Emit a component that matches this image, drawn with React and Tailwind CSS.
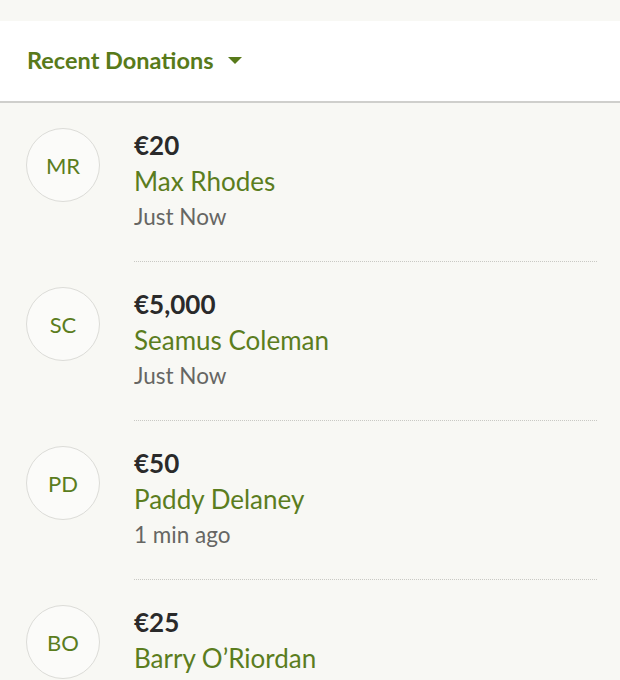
import React from "react";

const donations = [
  { initials: "MR", amount: "€20", name: "Max Rhodes", time: "Just Now" },
  { initials: "SC", amount: "€5,000", name: "Seamus Coleman", time: "Just Now" },
  { initials: "PD", amount: "€50", name: "Paddy Delaney", time: "1 min ago" },
  { initials: "BO", amount: "€25", name: "Barry O’Riordan", time: "2 mins ago" },
];

const App = () => {
  return (
    <div
      className="h-[680px] w-[620px] overflow-hidden bg-[#f8f8f4]"
      style={{ fontFamily: "Lato, 'Open Sans', sans-serif" }}
    >
      <div className="h-[21px]" />

      {/* Header */}
      <div className="flex h-[82px] items-center border-b-2 border-[#cfcfcc] bg-white pl-[27px]">
        <button className="flex items-center gap-[14px] text-[23.5px] font-bold text-[#587a1a]">
          Recent Donations
          <svg width="14" height="7" viewBox="0 0 14 7" className="mt-[-2px]">
            <polygon points="0,0 14,0 7,7" fill="#587a1a" />
          </svg>
        </button>
      </div>

      {/* Donations list */}
      <div>
        {donations.map((d) => (
          <div key={d.initials} className="flex pl-[26px] pr-[23px]">
            <div className="mt-[25px] flex h-[74px] w-[74px] shrink-0 items-center justify-center rounded-full border border-[#dcdcd8] bg-[#fbfbf9] text-[22px] text-[#5b7d1e]">
              {d.initials}
            </div>
            <div className="ml-[34px] flex-1 border-b border-dotted border-[#c9c9c4] pt-[24px] pb-[26px] leading-[36px]">
              <div className="text-[26px] font-bold text-[#2a2a2a]">{d.amount}</div>
              <div className="text-[26px] text-[#5b7d1e]">{d.name}</div>
              <div className="text-[22.5px] text-[#666663]">{d.time}</div>
            </div>
          </div>
        ))}
      </div>
    </div>
  );
};

export default App;
